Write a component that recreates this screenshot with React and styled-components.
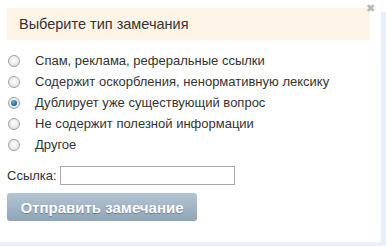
import React, { useState } from "react";
import styled, { createGlobalStyle } from "styled-components";

const Global = createGlobalStyle`
  html, body { margin: 0; padding: 0; background: #ffffff; }
  body { font-family: Arial, "Liberation Sans", sans-serif; }
`;

const Page = styled.div`
  width: 386px;
  height: 246px;
  display: flex;
  flex-direction: column;
  background: #e9eff8;
`;

const Row = styled.div`
  display: flex;
  flex: 1;
`;

const Panel = styled.div`
  position: relative;
  width: 381px;
  background: #ffffff;
  padding: 8px 0 0 7px;
  box-sizing: border-box;
`;

const Side = styled.div`
  width: 5px;
  display: flex;
  flex-direction: column;
`;

const SideTop = styled.div`
  height: 12px;
  background: #ffffff;
`;

const Bottom = styled.div`
  height: 4px;
  background: #e9eff8;
`;

const Close = styled.span`
  position: absolute;
  top: 2px;
  right: 6px;
  font-size: 11px;
  color: #b3b8b3;
  line-height: 12px;
`;

const Header = styled.div`
  width: 363px;
  height: 32px;
  background: #fef5e8;
  display: flex;
  align-items: center;
  padding-left: 12px;
  box-sizing: border-box;
  font-size: 14.5px;
  color: #333333;
  margin-bottom: 10px;
`;

const Options = styled.div`
  display: flex;
  flex-direction: column;
`;

const Option = styled.label`
  display: flex;
  align-items: center;
  height: 21px;
  font-size: 13px;
  color: #333333;
`;

const Radio = styled.span`
  width: 12px;
  height: 12px;
  border-radius: 50%;
  box-sizing: border-box;
  border: 1px solid #a0a0a0;
  background: radial-gradient(circle at 50% 40%, #ffffff 0%, #e6e6e6 70%, #d0d0d0 100%);
  margin: 0 15px 0 1px;
  display: flex;
  align-items: center;
  justify-content: center;

  &::after {
    content: "";
    width: 6px;
    height: 6px;
    border-radius: 50%;
    background: radial-gradient(circle at 40% 35%, #6fb0e0 0%, #1b5f9a 70%, #0d3e6a 100%);
    display: ${(p) => (p.$checked ? "block" : "none")};
  }
`;

const LinkRow = styled.div`
  display: flex;
  align-items: center;
  margin-top: 11px;
  font-size: 13px;
  color: #333333;
`;

const Input = styled.input`
  width: 175px;
  height: 19px;
  box-sizing: border-box;
  border: 1px solid #a9a9a9;
  margin-left: 3px;
  padding: 0;
`;

const Button = styled.button`
  margin-top: 8px;
  width: 190px;
  height: 28px;
  border: none;
  border-radius: 3px;
  background: linear-gradient(#b4c4d3, #90a5b9);
  color: #ffffff;
  font-family: Arial, "Liberation Sans", sans-serif;
  font-weight: bold;
  font-size: 15px;
  text-shadow: 0 1px 1px rgba(60, 80, 100, 0.5);
  padding: 0;
`;

const items = [
  "Спам, реклама, реферальные ссылки",
  "Содержит оскорбления, ненормативную лексику",
  "Дублирует уже существующий вопрос",
  "Не содержит полезной информации",
  "Другое",
];

export default function App() {
  const [sel, setSel] = useState(2);
  return (
    <Page>
      <Global />
      <Row>
        <Panel>
          <Close>✖</Close>
          <Header>Выберите тип замечания</Header>
          <Options>
            {items.map((t, i) => (
              <Option key={t} onClick={() => setSel(i)}>
                <Radio $checked={sel === i} />
                {t}
              </Option>
            ))}
          </Options>
          <LinkRow>
            Ссылка:
            <Input />
          </LinkRow>
          <Button>Отправить замечание</Button>
        </Panel>
        <Side>
          <SideTop />
        </Side>
      </Row>
      <Bottom />
    </Page>
  );
}
